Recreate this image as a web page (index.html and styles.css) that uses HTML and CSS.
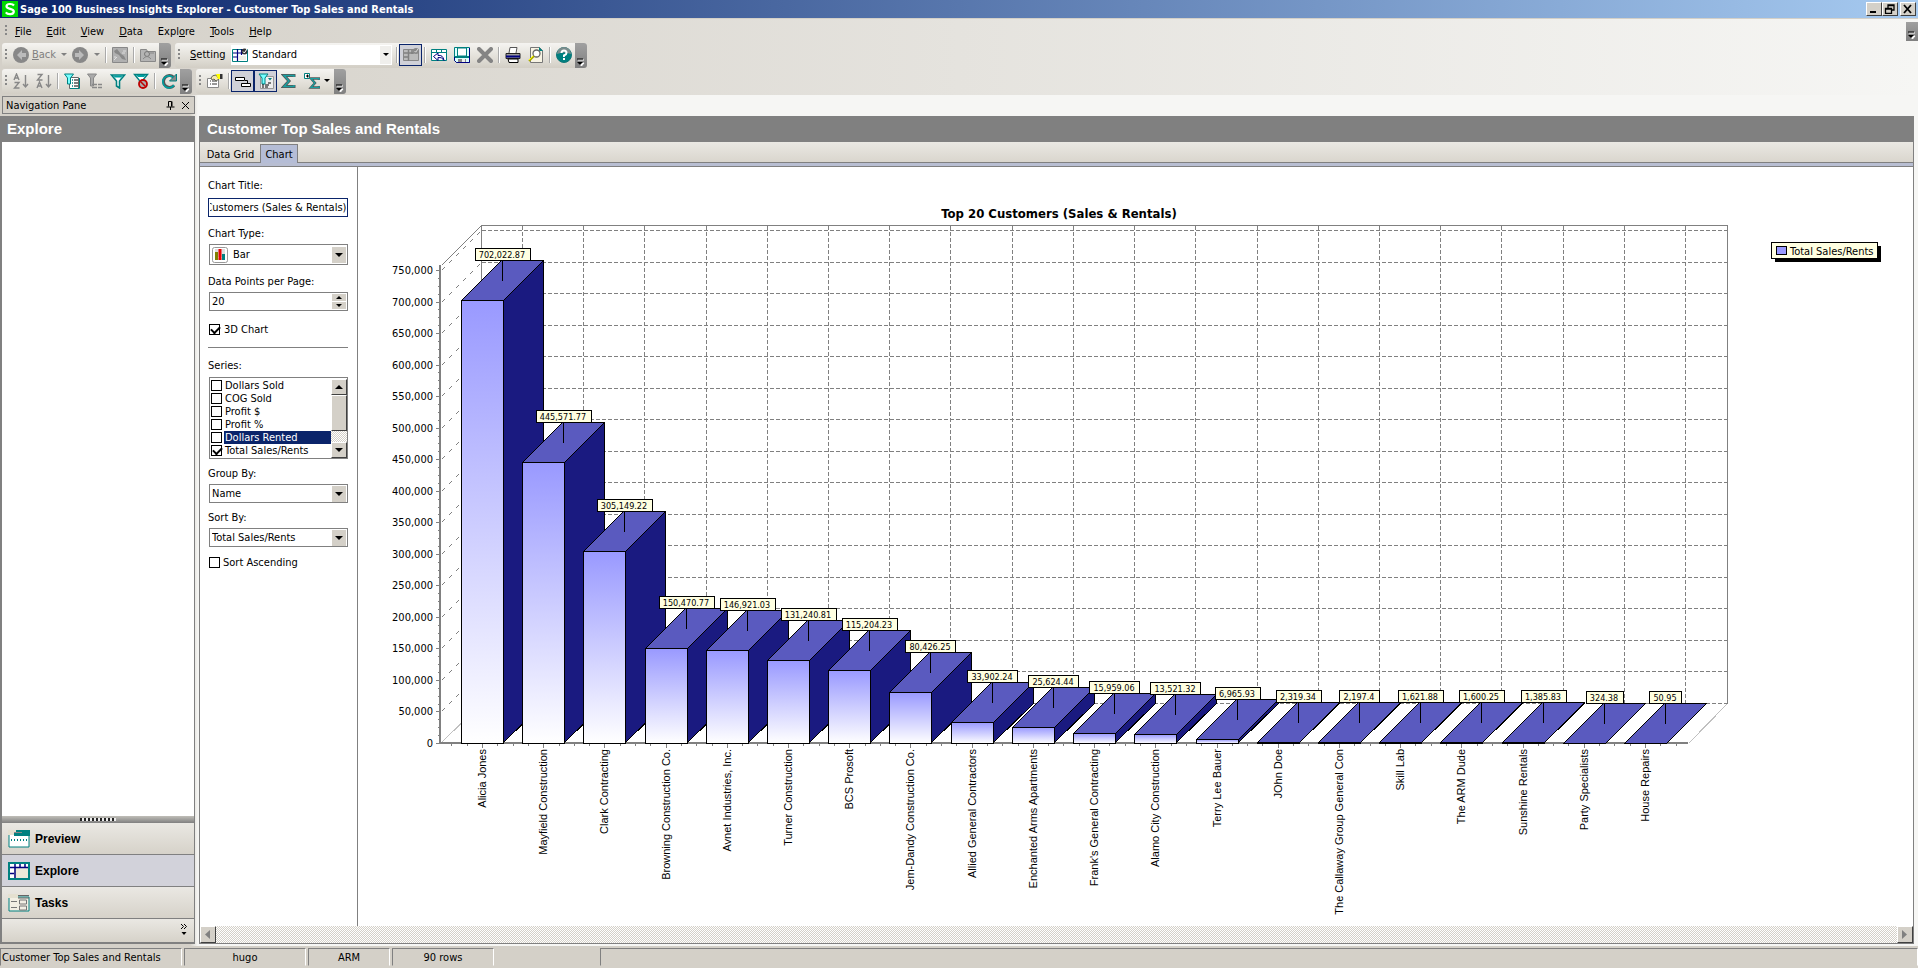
FILE: index.html
```
<!DOCTYPE html>
<html lang="en">
<head>
	<meta charset="utf-8">
	<meta name="viewport" content="width=device-width, initial-scale=1.0">
	<title>Sage 100 Business Insights Explorer - Customer Top Sales and Rentals</title>
	<link rel="stylesheet" href="styles.css">
</head>
<body>
	<header class="titlebar">
		<svg class="logo" viewBox="0 0 16 16"><rect width="16" height="16" fill="#00d800"/><path d="M12 4.5C10.500 2.500 4.500 2.300 4.500 5.300C4.500 8.600 11.800 7.200 11.800 10.600C11.800 14 5.500 13.800 3.800 11.400" fill="none" stroke="#fff" stroke-width="2.200"/></svg>
		<h1>Sage 100 Business Insights Explorer - Customer Top Sales and Rentals</h1>
		<div class="winbtns">
			<button aria-label="Minimize"><svg width="12" height="10" viewBox="0 0 12 10"><path d="M2 8h6" stroke="#000" stroke-width="2"/></svg></button>
			<button aria-label="Restore"><svg width="12" height="10" viewBox="0 0 12 10"><path d="M4 4V1h6v5H8M4 1.500h6" fill="none" stroke="#000" stroke-width="1.300"/><path d="M1.500 4.500h6v5h-6zM1.500 5h6" fill="none" stroke="#000" stroke-width="1.300"/></svg></button>
			<button class="close" aria-label="Close"><svg width="12" height="10" viewBox="0 0 12 10"><path d="M2 1l7 8M9 1L2 9" stroke="#000" stroke-width="1.800"/></svg></button>
		</div>
	</header>

	<div class="bars">
		<nav class="menubar">
			<span class="grip"></span>
			<a href="#"><u>F</u>ile</a>
			<a href="#"><u>E</u>dit</a>
			<a href="#"><u>V</u>iew</a>
			<a href="#"><u>D</u>ata</a>
			<a href="#">Expl<u>o</u>re</a>
			<a href="#"><u>T</u>ools</a>
			<a href="#"><u>H</u>elp</a>
			<button class="more" aria-label="More"><svg width="8" height="8" viewBox="0 0 8 8"><path d="M1 2h6M2 5h5L4.500 8z" fill="#fff" stroke="#fff"/><path d="M0 1h6" stroke="#000"/><path d="M0 4h6L3 7z"/></svg></button>
		</nav>

		<div class="toolrow">
			<div class="toolbar">
				<span class="grip"></span>
				<button class="tool off back"><svg viewBox="0 0 16 16"><circle cx="8" cy="8" r="8" fill="#888"/><path d="M9 3L4 8l5 5v-3h4V6H9z" fill="#bbb"/></svg><span><u>B</u>ack</span><i class="down"></i></button>
				<button class="tool off fwd" aria-label="Forward"><svg viewBox="0 0 16 16"><circle cx="8" cy="8" r="8" fill="#888"/><path d="M7 3l5 5-5 5v-3H3V6h4z" fill="#bbb"/></svg><i class="down"></i></button>
				<span class="sep"></span>
				<button class="tool" aria-label="Edit view"><svg viewBox="0 0 16 16"><path d="M.5.5h15v15H.5z" fill="#b0b0b0" stroke="#888"/><path d="M2 4l3-2 4 5 3 2 2 4-4-1-3-4-4-2z" fill="#888"/><path d="M2 13l3-3M11 4h3M10 6h3M2 10h2" stroke="#ddd"/></svg></button>
				<span class="sep"></span>
				<button class="tool" aria-label="Folder"><svg viewBox="0 0 16 16"><path d="M.5 2.500h6l1 2h8v10H.5z" fill="#b4b4b4" stroke="#888"/><circle cx="7" cy="7" r="2.500" fill="none" stroke="#777"/><path d="M3 12q4-5 8 0M10 6h4" fill="none" stroke="#888"/></svg></button>
				<button class="more" aria-label="More"><svg width="8" height="8" viewBox="0 0 8 8"><path d="M1 2h6M2 5h5L4.500 8z" fill="#fff" stroke="#fff"/><path d="M0 1h6" stroke="#000"/><path d="M0 4h6L3 7z"/></svg></button>
			</div>
			<div class="toolbar">
				<span class="grip"></span>
				<label class="setlabel" for="setting"><u>S</u>etting</label>
				<span class="setting">
					<svg viewBox="0 0 16 14"><path d="M.5 1.500h15v12H.5z" fill="#fff" stroke="#008080"/><path d="M1 5h10M5.500 1v12M9.500 1v6M1 9h4" stroke="#000080" stroke-width="1.200"/><path d="M7 9h7M7 11h7" stroke="#e4e0c8"/><circle cx="12.500" cy="3.500" r="3" fill="#333"/><path d="M11 3.500l1.300 1.500L15 1" fill="none" stroke="#fff"/></svg>
					<select id="setting"><option>Standard</option></select>
					<i class="arrow"></i>
				</span>
				<span class="sep"></span>
				<button class="tool on" aria-label="Save setting"><svg viewBox="0 0 16 16"><path d="M.5 2.500h15v11H.5z" fill="#bbb" stroke="#888"/><path d="M1 6h10M5.500 3v11M9 3v4M1 10h5" stroke="#808080" stroke-width="1.500"/><circle cx="13" cy="4" r="3" fill="#888"/><path d="M11.500 4l1.200 1.200L15 2" fill="none" stroke="#ddd"/></svg></button>
				<span class="sep"></span>
				<button class="tool" aria-label="Reset"><svg viewBox="0 0 16 16"><path d="M.5 2.500h15v11H.5z" fill="#fff" stroke="#008080"/><path d="M1 5.500h14M5.500 3v3M10.500 3v3" stroke="#008080"/><path d="M7 6L2.500 9.500l4.500 4v-3q4-1 6 3-1-6-6-5z" fill="#fff" stroke="#000080"/></svg></button>
				<button class="tool" aria-label="Save"><svg viewBox="0 0 16 16"><path d="M.5.5h15v15h-13l-2-2z" fill="#dff" stroke="#008080"/><path d="M3.500 1h9v8h-9z" fill="#fff" stroke="#008080"/><path d="M1 10h14" stroke="#008080" stroke-width="2"/><path d="M4 12h8v3H4z" fill="#888"/><path d="M8 12h3v3H8z" fill="#eee"/><path d="M15.500 1v14.500h-13l-2-2V10" fill="none" stroke="#000080"/></svg></button>
				<button class="tool" aria-label="Delete"><svg viewBox="0 0 16 16"><path d="M2 2l12 12M14 2L2 14" stroke="#848484" stroke-width="4" stroke-linecap="round"/></svg></button>
				<span class="sep"></span>
				<button class="tool" aria-label="Print"><svg viewBox="0 0 16 16"><path d="M4 6L5 .5h7L11 6" fill="#fff" stroke="#555"/><path d="M1 6.500h14v5H1z" fill="#999" stroke="#222"/><path d="M1 9.500h14" stroke="#000080" stroke-width="2"/><path d="M3 12h10v3.500H4z" fill="#fff" stroke="#000"/></svg></button>
				<button class="tool" aria-label="Print preview"><svg viewBox="0 0 16 16"><path d="M2.500.5h9l3 3v12h-12z" fill="#f8f4e4" stroke="#777"/><path d="M11.500.5v3h3" fill="#008080" stroke="#008080"/><circle cx="8.500" cy="6.500" r="3.500" fill="#fff" stroke="#666" stroke-width="1.300"/><path d="M6 9l-5 5" stroke="#aa0" stroke-width="2"/><path d="M5 9l-4 4" stroke="#ff0"/></svg></button>
				<span class="sep"></span>
				<button class="tool" aria-label="Help"><svg viewBox="0 0 16 16"><circle cx="8" cy="8" r="7.500" fill="#008080" stroke="#177"/><path d="M1 7A7 7 0 0 1 15 7q-7-3-14 0" fill="#7a8c8c"/><path d="M5.500 6Q5.500 3.500 8 3.500T10.500 6Q10.500 7.500 8 8.500V10M8 11v2" fill="none" stroke="#fff" stroke-width="2"/></svg></button>
				<button class="more" aria-label="More"><svg width="8" height="8" viewBox="0 0 8 8"><path d="M1 2h6M2 5h5L4.500 8z" fill="#fff" stroke="#fff"/><path d="M0 1h6" stroke="#000"/><path d="M0 4h6L3 7z"/></svg></button>
			</div>
		</div>

		<div class="toolrow">
			<div class="toolbar">
				<span class="grip"></span>
				<button class="tool" aria-label="Sort ascending"><svg viewBox="0 0 16 16"><path d="M1 7L3.500 1 6 7M2 5h3M1.500 9.500H6L1.500 15H6.500M12.500 2v11M10 11l2.500 3 2.500-3" fill="none" stroke="#888" stroke-width="1.400"/></svg></button>
				<button class="tool" aria-label="Sort descending"><svg viewBox="0 0 16 16"><path d="M1.500 1.500H6L1.500 7H6.500M1 15l2.500-6L6 15M2 13h3M12.500 2v11M10 11l2.500 3 2.500-3" fill="none" stroke="#888" stroke-width="1.400"/></svg></button>
				<span class="sep"></span>
				<button class="tool" aria-label="Filter list"><svg viewBox="0 0 16 16"><path d="M5.500 4.500h9v11h-9z" fill="#fff" stroke="#666"/><path d="M.5 1h9L6.500 5v6h-3V5z" fill="#7ff" stroke="#008080"/><path d="M8 7h1M8 10h1M8 13h1" stroke="#008080" stroke-width="1.500"/><path d="M10 7h4M10 10h4M10 13h4" stroke="#000"/><path d="M15.500 5v10.500H6" fill="none" stroke="#008080"/></svg></button>
				<button class="tool" aria-label="Filter group"><svg viewBox="0 0 16 16"><path d="M.5 1h9L6.500 5v8h-3V5z" fill="#aaa" stroke="#888"/><path d="M5 11.500h5M11 11.500h4M5 14.500h5M11 14.500h4" stroke="#888" stroke-width="1.300"/></svg></button>
				<button class="tool" aria-label="Filter"><svg viewBox="0 0 16 16"><path d="M1.500 2h13L9.500 8v7l-3-2V8z" fill="#fff" stroke="#008080" stroke-width="1.600"/><path d="M3 2.500h10l-2 2H5z" fill="#00a0a0"/></svg></button>
				<button class="tool" aria-label="Remove filter"><svg viewBox="0 0 16 16"><path d="M1.500 1.500h13l-5 6v6l-3-2v-4z" fill="#fff" stroke="#008080" stroke-width="1.400"/><path d="M3 2h10l-2 2H5z" fill="#00a0a0"/><circle cx="10" cy="11" r="4" fill="#aaa" stroke="#c00000" stroke-width="1.800"/><path d="M7.500 8.500l5 5" stroke="#c00000" stroke-width="1.500"/></svg></button>
				<span class="sep"></span>
				<button class="tool" aria-label="Refresh"><svg viewBox="0 0 16 16"><path d="M13 12.500A6 6 0 1 1 12.500 4" fill="none" stroke="#555" stroke-width="3"/><path d="M13 12A6 6 0 1 1 12 4.500" fill="none" stroke="#00a0a0" stroke-width="1.600"/><path d="M15.500 1v7h-7z" fill="#888" stroke="#008080"/></svg></button>
				<button class="more" aria-label="More"><svg width="8" height="8" viewBox="0 0 8 8"><path d="M1 2h6M2 5h5L4.500 8z" fill="#fff" stroke="#fff"/><path d="M0 1h6" stroke="#000"/><path d="M0 4h6L3 7z"/></svg></button>
			</div>
			<div class="toolbar">
				<span class="grip"></span>
				<button class="tool" aria-label="Properties"><svg viewBox="0 0 16 16"><path d="M.5 5.500h11v9H.5z" fill="#fff" stroke="#888"/><path d="M3 8h1M3 11h1M5 8h5M5 11h5" stroke="#777" stroke-width="1.300"/><path d="M4 5q1-3 5-3l3 4-3 2-2-2-2 1z" fill="#f4e8b0" stroke="#665"/><path d="M9 1h4v5h-2z" fill="#ff0"/><path d="M13 1h2.500v5H13z" fill="#333"/></svg></button>
				<span class="sep"></span>
				<button class="tool on" aria-label="Outline"><svg viewBox="0 0 16 16"><path d="M.5 4.500h9v3h-9zM6.500 10.500h9v3h-9z" fill="#fff" stroke="#000"/><path d="M12.500 10V7.500H10" fill="none" stroke="#000"/></svg></button>
				<button class="tool on" aria-label="Filter panel"><svg viewBox="0 0 16 16"><path d="M2.500 3.500h13v12h-13z" fill="#eee" stroke="#999"/><path d="M10 5h4l-2 2.500z" fill="#008080"/><path d="M1 1h9L7 5v6H4V5z" fill="#7ff" stroke="#008080"/><path d="M4 12h2M7 12h4M4 14h2M7 14h3M10 10h3" stroke="#000"/></svg></button>
				<button class="tool" aria-label="Totals"><svg viewBox="0 0 16 16"><path d="M13 4V2.500H3L8 8l-5 5.500h10V12" fill="none" stroke="#555" stroke-width="3"/><path d="M13 4V2.500H3L8 8l-5 5.500h10V12" fill="none" stroke="#1aa0a0" stroke-width="1.500"/></svg></button>
				<button class="tool totals" aria-label="Add total"><svg viewBox="0 0 16 16"><path d="M.5.5h5v5h-5z" fill="#fff" stroke="#008080"/><path d="M2 3h3M3.500 1.500v3" stroke="#000"/><path d="M15 7V5.500H7L11 10l-4 4.500h8V13" fill="none" stroke="#555" stroke-width="2.400"/><path d="M15 7V5.500H7L11 10l-4 4.500h8V13" fill="none" stroke="#1aa0a0" stroke-width="1.200"/></svg><i class="down dark"></i></button>
				<button class="more" aria-label="More"><svg width="8" height="8" viewBox="0 0 8 8"><path d="M1 2h6M2 5h5L4.500 8z" fill="#fff" stroke="#fff"/><path d="M0 1h6" stroke="#000"/><path d="M0 4h6L3 7z"/></svg></button>
			</div>
		</div>
	</div>

	<div class="workspace">
		<aside class="navpane">
			<div class="navhead">
				<span>Navigation Pane</span>
				<button aria-label="Pin"><svg width="9" height="9" viewBox="0 0 9 9"><path d="M2.500 5.500v-5h3v5M6 .5v5M.5 6h8M4.500 6v3" fill="none" stroke="#000"/></svg></button>
				<button aria-label="Close"><svg width="9" height="9" viewBox="0 0 9 9"><path d="M1 1l7 7M8 1L1 8" stroke="#000"/></svg></button>
			</div>
			<div class="navbody">
				<h2 class="band">Explore</h2>
				<div class="navlist"></div>
				<div class="splitter"><span></span></div>
				<button class="navitem"><svg viewBox="0 0 22 18"><path d="M1 1h20v16H1z" fill="#fff" stroke="#008080"/><path d="M0 0h8v5H0z" fill="#e4e0d0"/><path d="M8 1.500h14M6 4.500h16" stroke="#008080" stroke-width="3"/><path d="M6 2.500h8" stroke="#888"/><path d="M3 10h16" stroke="#008080" stroke-dasharray="1 2" stroke-width="2"/></svg>Preview</button>
				<button class="navitem current"><svg viewBox="0 0 22 18"><path d="M1 1h20v16H1z" fill="#ece8d8" stroke="#008080" stroke-width="2"/><path d="M2 2h18v3H2zM2 5h4v11H2z" fill="#fff"/><path d="M2 5.500h18M7 2v14M12 2v3M17 2v3M2 11.500h4" stroke="#000080" stroke-width="1.500"/></svg>Explore</button>
				<button class="navitem"><svg viewBox="0 0 22 18"><path d="M1 3h20v14H1z" fill="#f2efe4" stroke="#008080"/><path d="M0 0h10v4H0z" fill="#e4e0d0"/><path d="M10 1.500h11M10 4h11" stroke="#666"/><path d="M3 7.500h6M3 13.500h6M11.500 6h7v4h-7zM11.500 12h7v4h-7z" fill="none" stroke="#777"/></svg>Tasks</button>
				<div class="navmore"><button aria-label="Configure buttons"><svg width="8" height="13" viewBox="0 0 8 13"><path d="M1 1l2.500 2.500L1 6M4 1l2.500 2.500L4 6" fill="none" stroke="#000"/><path d="M1.500 9h5L4 12z"/></svg></button></div>
			</div>
		</aside>

		<main class="main">
			<h2 class="band">Customer Top Sales and Rentals</h2>
			<div class="tabs">
				<button class="tab">Data Grid</button>
				<button class="tab active">Chart</button>
			</div>
			<div class="content">
				<form class="options" onsubmit="event.preventDefault()" autocomplete="off">
					<label class="first" for="ctitle">Chart Title:</label>
					<input class="field focus" type="text" id="ctitle" value="Top 20 Customers (Sales &amp; Rentals)">

					<label for="ctype">Chart Type:</label>
					<div class="combo icon">
						<svg viewBox="0 0 16 16"><path d="M.5 2.500q0-2 2-2h11q2 0 2 2v11q0 2-2 2h-11q-2 0-2-2z" fill="#fff" stroke="#999"/><path d="M3 3h10M3 5h10M3 7h10M3 9h10M3 12h10" stroke="#bbb"/><path d="M4.500 5v8" stroke="#808000" stroke-width="3"/><path d="M8 2v11" stroke="#e00" stroke-width="3"/><path d="M11.500 7v6" stroke="#008080" stroke-width="3"/></svg>
						<select id="ctype"><option>Bar</option></select>
						<i class="arrow"></i>
					</div>

					<label for="points">Data Points per Page:</label>
					<div class="combo spin">
						<input type="text" id="points" value="20">
						<div class="spinbtns"><button aria-label="Up"></button><button aria-label="Down"></button></div>
					</div>

					<label class="check alone"><input type="checkbox" checked>3D Chart</label>
					<hr>

					<div class="caption">Series:</div>
					<div class="listbox">
						<div class="rows">
							<label class="check"><input type="checkbox"><span>Dollars Sold</span></label>
							<label class="check"><input type="checkbox"><span>COG Sold</span></label>
							<label class="check"><input type="checkbox"><span>Profit $</span></label>
							<label class="check"><input type="checkbox"><span>Profit %</span></label>
							<label class="check picked"><input type="checkbox"><span>Dollars Rented</span></label>
							<label class="check"><input type="checkbox" checked><span>Total Sales/Rents</span></label>
						</div>
						<div class="vscroll">
							<button class="up" aria-label="Scroll up"></button>
							<span class="thumb"></span>
							<button class="dn" aria-label="Scroll down"></button>
						</div>
					</div>

					<label for="group">Group By:</label>
					<div class="combo"><select id="group"><option>Name</option></select><i class="arrow"></i></div>

					<label for="sort">Sort By:</label>
					<div class="combo"><select id="sort"><option>Total Sales/Rents</option></select><i class="arrow"></i></div>

					<label class="check last"><input type="checkbox">Sort Ascending</label>
				</form>
				<div class="chart"><svg id="chart" viewBox="0 0 1555 759"></svg></div>
			</div>
			<div class="hscroll">
				<button aria-label="Scroll left"><svg width="6" height="9" viewBox="0 0 6 9"><path d="M5 0v9L0 4.500z" fill="#808080"/></svg></button>
				<button aria-label="Scroll right"><svg width="6" height="9" viewBox="0 0 6 9"><path d="M0 0v9l5-4.500z" fill="#808080"/></svg></button>
			</div>
		</main>
	</div>

	<footer class="status">
		<span class="s1">Customer Top Sales and Rentals</span>
		<span class="s2">hugo</span>
		<span class="s3">ARM</span>
		<span class="s4">90 rows</span>
		<span class="gap"></span>
		<span class="s5"></span>
	</footer>

	<script src="chart.js"></script>
</body>
</html>
```
FILE: styles.css
```
*{
    box-sizing: border-box;
}
body{
    margin: 0;
    height: 100vh;
    display: flex;
    flex-direction: column;
    overflow: hidden;
    font-family: "DejaVu Sans Condensed", "DejaVu Sans", sans-serif;
    font-size: 11px;
    color: #000;
    background: linear-gradient(to right, #d4d0c8, #f6f6f4);
}
button, input, select{
    font: inherit;
    color: inherit;
    margin: 0;
    padding: 0;
    border: 0;
    border-radius: 0;
    background: none;
    appearance: none;
    outline: none;
}
svg{
    display: block;
    flex: none;
}

/* title bar */
.titlebar{
    display: flex;
    align-items: center;
    height: 18px;
    padding: 0 2px;
    gap: 2px;
    color: #fff;
    background: linear-gradient(to right, #0a246a, #a6caf0);
}
.titlebar h1{
    flex: 1;
    margin: 0;
    font-size: 11px;
    white-space: nowrap;
}
.logo{
    width: 16px;
    height: 16px;
}
.winbtns{
    display: flex;
}
.winbtns button, .hscroll button{
    display: flex;
    align-items: center;
    justify-content: center;
    width: 16px;
    height: 14px;
    background: #d4d0c8;
    border: 1px solid;
    border-color: #fff #404040 #404040 #fff;
}
.winbtns .close{
    margin-left: 2px;
}

/* menus and toolbars */
.bars{
    padding-left: 2px;
    height: 77px;
    border-top: 1px solid #d4d0c8;
}
.menubar{
    display: flex;
    align-items: center;
    height: 24px;
    padding-left: 3px;
}
.menubar a{
    margin-right: 15px;
    color: #000;
    text-decoration: none;
}
.menubar .grip{
    margin-right: 8px;
}
.menubar .more{
    height: 19px;
    margin: 0 0 0 auto;
    border-radius: 0;
}
.grip{
    width: 2px;
    height: 12px;
    margin-right: 2px;
    background: repeating-linear-gradient(#888 0 2px, transparent 2px 4px);
}
.toolrow{
    display: flex;
    gap: 4px;
    height: 26px;
}
.toolbar{
    display: flex;
    align-items: center;
    height: 25px;
    padding: 0 0 2px 3px;
    border-radius: 3px;
    background: linear-gradient(#f5f4f1, #dedbd3 70%, #d2cec5);
}
.tool{
    display: flex;
    align-items: center;
    justify-content: center;
    width: 23px;
    height: 22px;
}
.tool svg{
    width: 16px;
    height: 16px;
}
.off{
    color: #808080;
}
.back{
    width: 60px;
    gap: 3px;
    padding-left: 4px;
    justify-content: flex-start;
}
.back .down{
    margin-left: 2px;
}
.fwd{
    width: 34px;
    gap: 6px;
}
.totals{
    width: 34px;
    gap: 4px;
}
.on{
    background: #d0d1d8;
    border: 1px solid #0a246a;
}
.down{
    border: 3px solid transparent;
    border-top-color: #808080;
    border-bottom: 0;
}
.dark{
    border-top-color: #000;
}
.sep{
    width: 2px;
    height: 16px;
    margin: 0 1px 0 2px;
    background: #aaa;
    border-right: 1px solid #fff;
}
.more{
    display: flex;
    align-items: flex-end;
    justify-content: center;
    width: 12px;
    height: 25px;
    margin-bottom: -2px;
    padding-bottom: 2px;
    border-radius: 0 3px 3px 0;
    background: linear-gradient(#a0a0a0, #808080);
}
.setlabel{
    width: 49px;
    padding-left: 8px;
}
.setting{
    display: flex;
    align-items: center;
    width: 161px;
    height: 20px;
    margin-right: 2px;
    background: #fff;
}
.setting svg{
    width: 16px;
    height: 14px;
    margin: 0 4px 0 1px;
}
.setting select{
    flex: 1;
}
.arrow{
    display: flex;
    align-items: center;
    justify-content: center;
    width: 14px;
    height: 16px;
    background: #d4d0c8;
}
.arrow::before{
    content: "";
    border: 4px solid transparent;
    border-top-color: #000;
    border-bottom: 0;
}
.setting .arrow{
    width: 11px;
    height: 18px;
    margin-right: 1px;
    background: #f0efec;
}
.setting .arrow::before{
    border-width: 3px 3px 0;
}

/* navigation pane */
.workspace{
    flex: 1;
    min-height: 0;
    display: flex;
    gap: 4px;
    padding: 0 4px 2px 0;
    background: linear-gradient(to right, #d4d0c8 190px, #f6f6f4 198px);
}
.navpane{
    display: flex;
    flex-direction: column;
    width: 195px;
    padding-top: 1px;
}
.navhead{
    display: flex;
    align-items: center;
    gap: 6px;
    height: 18px;
    margin: 0 0 2px 2px;
    padding: 0 4px 0 3px;
    border: 1px solid #808080;
    background: #d4d0c8;
}
.navhead span{
    flex: 1;
}
.navbody{
    flex: 1;
    display: flex;
    flex-direction: column;
    border: 2px solid #808080;
    border-top: 0;
    border-right-width: 1px;
}
.band{
    height: 26px;
    margin: 0;
    padding-left: 5px;
    color: #fff;
    background: #808080;
    font: bold 15px/26px "Liberation Sans", Arial, sans-serif;
}
.navlist{
    flex: 1;
    background: #fff;
}
.splitter{
    display: flex;
    justify-content: center;
    align-items: center;
    height: 7px;
    background: linear-gradient(#c0beb8, #808080);
}
.splitter span{
    width: 36px;
    height: 3px;
    background: repeating-linear-gradient(to right, #222 0 2px, #eee 2px 4px);
}
.navitem{
    display: flex;
    align-items: center;
    gap: 5px;
    height: 32px;
    padding-left: 6px;
    border-bottom: 1px solid #808080;
    background: linear-gradient(#eae8e3, #d6d2c9);
    font: bold 12px "Liberation Sans", Arial, sans-serif;
}
.navitem svg{
    width: 22px;
    height: 18px;
}
.current{
    background: #d2d2da;
}
.navmore{
    display: flex;
    justify-content: flex-end;
    align-items: flex-start;
    height: 23px;
    padding: 4px 6px;
    background: linear-gradient(#eae8e3, #d6d2c9);
}

/* main area */
.main{
    flex: 1;
    min-width: 0;
    display: flex;
    flex-direction: column;
    margin-top: 21px;
}
.main .band{
    padding-left: 8px;
}
.tabs{
    display: flex;
    align-items: flex-end;
    height: 25px;
    padding-left: 1px;
    border: 1px solid #808080;
    border-top: 0;
    background: linear-gradient(#b8bed2, #b8bed2) bottom / 100% 3px no-repeat, linear-gradient(#808080, #808080) 0 20px / 100% 1px no-repeat, linear-gradient(#eae8e3, #d6d2c9);
}
.tab{
    height: 18px;
    width: 59px;
    margin-bottom: 3px;
}
.active{
    width: 38px;
    height: 19px;
    border: 1px solid #808080;
    border-bottom: 0;
    background: #b5bdd6;
}
.content{
    flex: 1;
    min-height: 0;
    display: flex;
    border: solid #808080;
    border-width: 0 1px;
    background: #fff;
}
.options{
    width: 158px;
    padding: 13px 9px 0 8px;
    border-right: 1px solid #808080;
}
.options > label, .caption{
    display: block;
    height: 16px;
    line-height: 12px;
}
.options > .first{
    height: 18px;
}
.field{
    display: block;
    width: 140px;
    height: 19px;
    margin-bottom: 11px;
    padding: 0 1px;
    border: 1px solid #808080;
}
.focus{
    border-color: #0a246a;
}
.combo{
    display: flex;
    align-items: center;
    height: 19px;
    margin-bottom: 9px;
    margin-left: 1px;
    padding: 0 1px 0 2px;
    border: 1px solid #808080;
}
.combo select, .combo input{
    flex: 1;
    min-width: 0;
}
.icon{
    height: 21px;
    gap: 5px;
    margin-bottom: 11px;
}
.icon svg{
    width: 16px;
    height: 16px;
}
.spinbtns{
    display: flex;
    flex-direction: column;
    gap: 1px;
}
.spinbtns button{
    display: flex;
    align-items: center;
    justify-content: center;
    width: 14px;
    height: 7px;
    background: #d4d0c8;
}
.spinbtns button::before{
    content: "";
    border: 3px solid transparent;
    border-bottom-color: #000;
    border-top: 0;
}
.spinbtns button + button::before{
    border: 3px solid transparent;
    border-top-color: #000;
    border-bottom: 0;
}
.options > .check, .check{
    display: flex;
    align-items: center;
    gap: 4px;
    height: 13px;
    line-height: 13px;
}
.check input{
    width: 11px;
    height: 11px;
    border: 1px solid #000;
    background: #fff;
}
.check input:checked::after{
    content: "";
    display: block;
    width: 7px;
    height: 4px;
    margin: 1px;
    border: solid #000;
    border-width: 0 0 2px 2px;
    transform: rotate(-45deg);
}
.options > .alone{
    margin: 12px 0 11px 1px;
}
hr{
    height: 1px;
    margin: 0 0 12px;
    border: 0;
    background: #808080;
}
.caption{
    height: 17px;
}
.listbox{
    display: flex;
    height: 82px;
    margin: 0 0 9px 1px;
    padding: 1px 0 0 1px;
    border: 1px solid #808080;
}
.rows{
    flex: 1;
}
.rows .check{
    gap: 2px;
}
.rows span{
    flex: 1;
    padding-left: 1px;
    white-space: nowrap;
}
.picked span{
    color: #fff;
    background: #0a246a;
}
.vscroll{
    display: flex;
    flex-direction: column;
    width: 16px;
    background: repeating-conic-gradient(#d4d0c8 0 25%, #fff 0 50%) 0 0 / 2px 2px;
}
.vscroll button, .thumb{
    display: flex;
    align-items: center;
    justify-content: center;
    height: 16px;
    background: #d4d0c8;
    border: 1px solid;
    border-color: #fff #404040 #404040 #fff;
}
.thumb{
    height: 36px;
}
.vscroll .dn{
    margin-top: auto;
}
.vscroll button::before{
    content: "";
    border: 4px solid transparent;
    border-bottom-color: #000;
    border-top: 0;
}
.vscroll .dn::before{
    border: 4px solid transparent;
    border-top-color: #000;
    border-bottom: 0;
}
.options > .last{
    gap: 3px;
    margin-left: 1px;
}
.hscroll{
    display: flex;
    justify-content: space-between;
    height: 18px;
    border: 1px solid #808080;
    border-top: 0;
    background: repeating-conic-gradient(#d4d0c8 0 25%, #fff 0 50%) 0 0 / 2px 2px;
}
.hscroll button{
    height: 17px;
}

/* chart */
.chart{
    flex: 1;
    min-width: 0;
}
.chart svg{
    width: 100%;
    height: 100%;
    shape-rendering: crispEdges;
}
.frame{
    stroke: #808080;
}
.faint{
    stroke: #c0c0c0;
}
.grid{
    stroke: #808080;
    stroke-dasharray: 4 2;
}
.slant{
    stroke: #808080;
    stroke-dasharray: 5 5;
}
.axis{
    stroke: #808080;
    stroke-width: 2;
}
.front{
    fill: url(#shade);
    stroke: #000;
}
.top{
    fill: #5a5abf;
    stroke: #000;
}
.side{
    fill: #1a1a80;
    stroke: #000;
}
.stem{
    stroke: #000;
}
.tag{
    fill: #ffffe1;
    stroke: #000;
}
.tagtext{
    font-size: 9px;
    text-anchor: middle;
}
.ylabel{
    text-anchor: end;
}
.xlabel{
    font-family: "Liberation Sans", Arial, sans-serif;
    text-anchor: end;
}
.ctitle{
    font-size: 13px;
    font-weight: bold;
    text-anchor: middle;
}

/* status bar */
.status{
    display: flex;
    gap: 2px;
    height: 22px;
    padding: 2px 0;
    background: #d4d0c8;
}
.status span{
    padding: 2px 1px;
    line-height: 14px;
    text-align: center;
    border: 1px solid;
    border-color: #808080 #fff #d4d0c8 #808080;
}
.status .s1{
    width: 182px;
    text-align: left;
    white-space: nowrap;
}
.status .s2{
    width: 122px;
}
.status .s3{
    width: 82px;
}
.status .s4{
    width: 102px;
}
.status .gap{
    width: 102px;
    border-color: transparent;
}
.status .s5{
    flex: 1;
}
```
FILE: chart.js
```
const customers = [
	["Alicia Jones", 702022.87],
	["Mayfield Construction", 445571.77],
	["Clark Contracting", 305149.22],
	["Browning Construction Co.", 150470.77],
	["Avnet Industries, Inc.", 146921.03],
	["Turner Construction", 131240.81],
	["BCS Prosoft", 115204.23],
	["Jem-Dandy Construction Co.", 80426.25],
	["Allied General Contractors", 33902.24],
	["Enchanted Arms Apartments", 25624.44],
	["Frank's General Contracting", 15959.06],
	["Alamo City Construction", 13521.32],
	["Terry Lee Bauer", 6965.93],
	["JOhn Doe", 2319.34],
	["The Callaway Group General Con", 2197.4],
	["Skill Lab", 1621.88],
	["The ARM Dude", 1600.25],
	["Sunshine Rentals", 1385.83],
	["Party Specialists", 324.38],
	["House Repairs", 50.95]
];

const left = 82, right = 1330, base = 576, topY = 98, depth = 40;
const step = 61.21, first = 124, barWidth = 42;
const max = 750000, maxHeight = 473;

const yOf = (v) => Math.round(base - v / max * maxHeight);
const line = (cls, x1, y1, x2, y2) => `<line class="${cls}" x1="${x1 + 0.5}" y1="${y1 + 0.5}" x2="${x2 + 0.5}" y2="${y2 + 0.5}"/>`;
const poly = (cls, pts) => `<polygon class="${cls}" points="${pts.map(p => (p[0] + 0.5) + "," + (p[1] + 0.5)).join(" ")}"/>`;

let out = `<defs><linearGradient id="shade" x1="0" y1="0" x2="0" y2="1"><stop offset="0" stop-color="#9999ff"/><stop offset="1" stop-color="#fff"/></linearGradient></defs>`;

// back wall
const wallLeft = left + depth + 1, wallRight = right + depth - 1;
out += line("frame", wallLeft, topY - depth, wallRight, topY - depth);
out += line("frame", wallLeft, topY - depth, wallLeft, base - depth);
out += line("frame", wallRight, topY - depth, wallRight, base - depth);
out += line("frame", left + 1, topY, wallLeft, topY - depth);
out += line("faint", left, base, wallLeft, base - depth);
out += line("faint", right, base, wallRight, base - depth);
for (let v = 0; v <= max; v += 50000) {
	const y = yOf(v);
	out += line("grid", wallLeft, y - depth, wallRight, y - depth);
	if (v) out += line("slant", left + 1, y, wallLeft, y - depth);
}
for (let i = 0; i < customers.length; i++) {
	const x = Math.round(first + i * step) + depth;
	out += line("grid", x, topY - depth, x, base - depth);
}

// axes
out += `<line class="axis" x1="${left}" y1="${topY}" x2="${left}" y2="${base + 1}"/>`;
out += `<line class="axis" x1="${left}" y1="${base}" x2="${right}" y2="${base}"/>`;
for (let v = 0; v <= max; v += 12500) {
	const y = yOf(v);
	out += line("frame", left - (v % 50000 ? 3 : 5), y, left, y);
	if (v % 50000 == 0) out += `<text class="ylabel" x="75" y="${y + 4}">${v.toLocaleString("en-US")}</text>`;
}
for (let i = -2; i <= customers.length * 4 - 2; i++) {
	const x = Math.round(first + i * step / 4);
	out += line("frame", x, base, x, base + (i % 4 ? 2 : 4));
}

// bars
let tags = "";
customers.forEach(([name, value], i) => {
	const mid = Math.round(first + i * step);
	const x1 = mid - barWidth / 2, x2 = x1 + barWidth;
	const y = yOf(value);
	out += poly("side", [[x2, y], [x2 + depth, y - depth], [x2 + depth, base - depth], [x2, base - 1]]);
	out += poly("top", [[x1, y], [x1 + depth, y - depth], [x2 + depth, y - depth], [x2, y]]);
	out += poly("front", [[x1, y], [x2, y], [x2, base], [x1, base]]);
	out += `<text class="xlabel" transform="translate(${mid + 4} 582) rotate(-90)">${name}</text>`;

	const label = value.toLocaleString("en-US");
	const w = label.replace(/\D/g, "").length * 5 + label.replace(/\d/g, "").length * 3 + 9;
	const cx = mid + 20;
	tags += line("stem", cx, y - depth, cx, y - 20);
	tags += `<rect class="tag" x="${Math.round(cx - w / 2) + 0.5}" y="${y - depth - 12 + 0.5}" width="${w}" height="12"/>`;
	tags += `<text class="tagtext" x="${cx}" y="${y - depth - 2}">${label}</text>`;
});
out += tags;

out += `<text class="ctitle" x="701" y="51">Top 20 Customers (Sales &amp; Rentals)</text>`;

// legend
out += `<rect x="1417" y="79" width="106" height="16"/>`;
out += `<rect class="tag" x="1413.5" y="75.5" width="106" height="16"/>`;
out += `<rect x="1418.5" y="79.5" width="10" height="8" fill="#9999ff" stroke="#000"/>`;
out += `<text x="1432" y="88">Total Sales/Rents</text>`;

document.getElementById("chart").innerHTML = out;

// the title is longer than its box, show the end of it
const titleBox = document.getElementById("ctitle");
titleBox.scrollLeft = titleBox.scrollWidth;
```
